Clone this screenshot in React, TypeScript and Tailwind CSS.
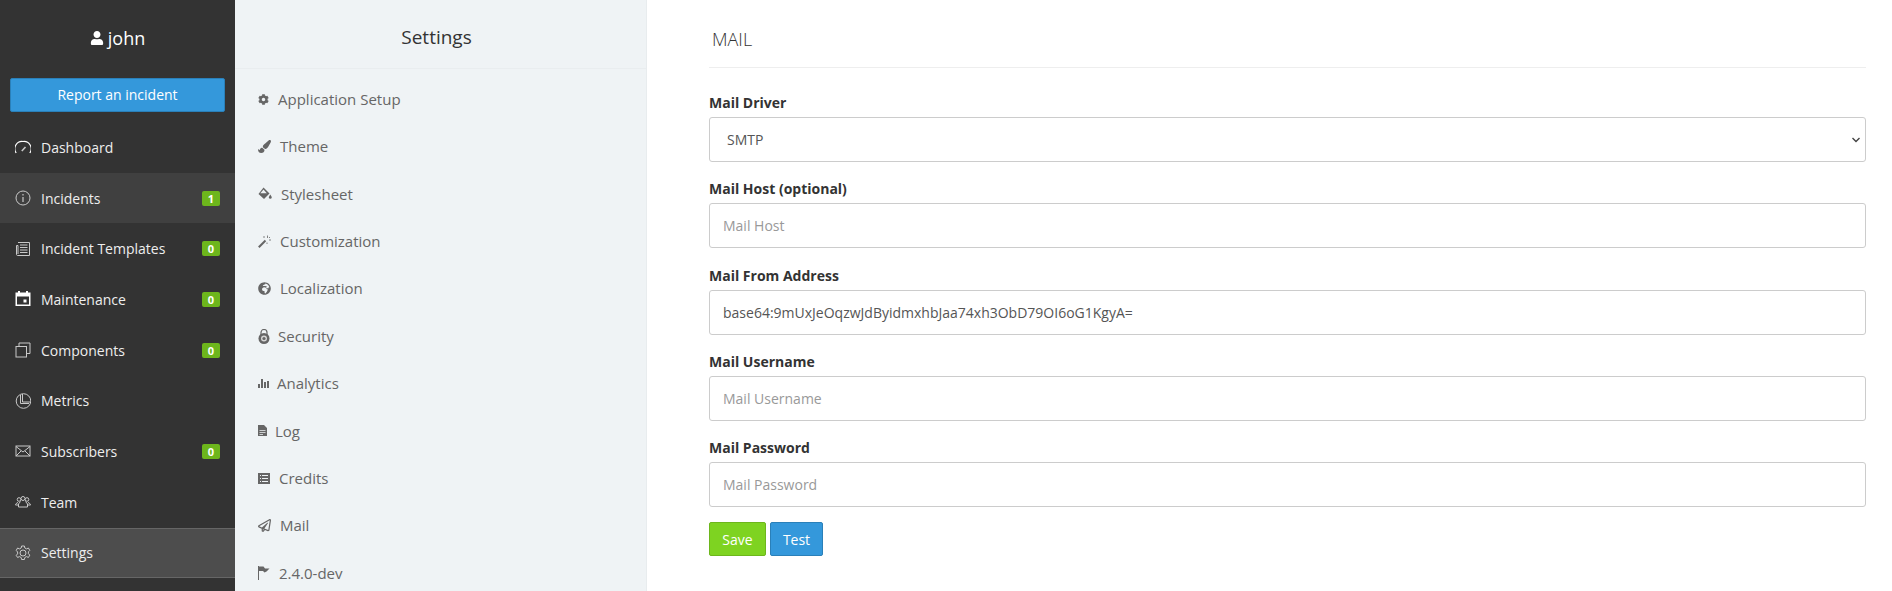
import React from "react";
import { FaCog, FaPaintBrush, FaGlobeAfrica, FaRegPaperPlane, FaUser } from "react-icons/fa";

const S = (p: { children: React.ReactNode }) => (
  <svg width="16" height="16" viewBox="0 0 16 16" fill="none" stroke="currentColor" strokeWidth="1" className="text-[#c9c9c9] shrink-0">
    {p.children}
  </svg>
);

const Speed = () => (
  <S>
    <path d="M1.200 14A7.300 7.300 0 0 1 8 2.500a7.300 7.300 0 0 1 6.800 11.500" strokeWidth="1.200" className="text-white" />
    <path d="M6.800 12 10.500 8" strokeWidth="1.600" />
  </S>
);
const Info = () => (
  <S>
    <circle cx="8" cy="8" r="7" />
    <path d="M8 7v5M8 4v1.400" strokeWidth="1.200" />
  </S>
);
const Paper = () => (
  <S>
    <path d="M3 1.500h11.500v13H2.500a1.200 1.200 0 0 1-1-1V4.500H3V13" />
    <path d="M5 4h7.500M5 6.500h7.500M5 9h7.500M5 11.500h7.500" />
  </S>
);
const Calendar = () => (
  <svg width="16" height="16" viewBox="0 0 16 16" className="text-white shrink-0" fill="currentColor">
    <path fillRule="evenodd" d="M3 0h2v1.500h6V0h2v1.500h2.500V15H.5V1.500H3V0ZM2 5.500V13.500h12V5.500H2Z" />
    <rect x="8.500" y="8.500" width="3" height="3" />
  </svg>
);
const Browsers = () => (
  <S>
    <rect x="1" y="4.500" width="10.500" height="10.500" />
    <path d="M4 4.500V1h11v10.500h-3.500" />
  </S>
);
const Pie = () => (
  <S>
    <circle cx="8.500" cy="8" r="7.300" />
    <path d="M7.500 1v8h7.500" />
    <path d="M5.500 2v8.500h8.500" />
  </S>
);
const Mail = () => (
  <S>
    <rect x="1" y="3" width="14" height="10" />
    <path d="M1 3.500 8 9l7-5.500M1 13l5-5M15 13l-5-5" />
  </S>
);
const People = () => (
  <S>
    <circle cx="4" cy="5.500" r="1.800" />
    <circle cx="8" cy="4.500" r="2" />
    <circle cx="12" cy="5.500" r="1.800" />
    <path d="M3 8.500c-1.500.5-2.500 1.500-2.500 2.500H3M13 8.500c1.500.5 2.500 1.500 2.500 2.500H13M5.500 7.500 3.500 10v3h9v-3l-2-2.500" />
  </S>
);
const Gear = () => (
  <S>
    <path d="M6.600 1h2.800l.4 2 1.800.9 1.800-.9 1.400 2.400-1.400 1.400v1.900l1.400 1.400-1.400 2.400-1.800-.9-1.800.9-.4 2H6.600l-.4-2-1.800-.9-1.800.9L1.200 10.300l1.400-1.400V7L1.200 5.400 2.600 3l1.800.9 1.800-.9z" />
    <circle cx="8" cy="8" r="3" />
  </S>
);

const mainItems: { label: string; icon: React.ReactNode; badge?: string; cls?: string }[] = [
  { label: "Dashboard", icon: <Speed /> },
  { label: "Incidents", icon: <Info />, badge: "1", cls: "bg-[#404040]" },
  { label: "Incident Templates", icon: <Paper />, badge: "0" },
  { label: "Maintenance", icon: <Calendar />, badge: "0" },
  { label: "Components", icon: <Browsers />, badge: "0" },
  { label: "Metrics", icon: <Pie /> },
  { label: "Subscribers", icon: <Mail />, badge: "0" },
  { label: "Team", icon: <People /> },
  { label: "Settings", icon: <Gear />, cls: "bg-[#4d4d4d] border-y border-[#666]" },
];

const Bucket = () => (
  <svg width="14" height="13" viewBox="0 0 14 13" fill="currentColor" className="shrink-0">
    <path d="M5.500.5 11.500 6.500 6 12 .5 7z" />
    <path d="M5.500 2.500 8.800 6.200H2.300z" fill="#eff3f5" />
    <path d="M12.300 7.500c.9 1.400 1.400 2.200 1.400 2.900a1.400 1.400 0 0 1-2.800 0c0-.7.500-1.500 1.400-2.900z" />
  </svg>
);
const Wand = () => (
  <svg width="13" height="13" viewBox="0 0 13 13" fill="none" stroke="currentColor" className="shrink-0">
    <path d="M.8 12.200 7.500 5.500" strokeWidth="2" />
    <path d="M6 1v2M9.500 .5v2.500M11 5h2M9 7.500v1.500M12 2l-1 1" strokeWidth=".8" />
  </svg>
);
const Lock = () => (
  <svg width="12" height="15" viewBox="0 0 12 15" className="shrink-0" fill="currentColor">
    <path fill="none" stroke="currentColor" strokeWidth="1.200" d="M3 6V3.500a3 3 0 0 1 6 0V6" />
    <circle cx="6" cy="9.500" r="5.500" />
    <circle cx="6" cy="9.500" r="3" fill="#d6d6d6" />
    <circle cx="6" cy="9.500" r="1.600" />
  </svg>
);
const Bars = () => (
  <svg width="11" height="9" viewBox="0 0 11 9" fill="currentColor" className="shrink-0">
    <rect x="0" y="5" width="2" height="4" />
    <rect x="3" y="0" width="2" height="9" />
    <rect x="6" y="3" width="2" height="6" />
    <rect x="9" y="2" width="2" height="7" />
  </svg>
);
const Doc = () => (
  <svg width="9" height="11" viewBox="0 0 9 11" fill="currentColor" className="shrink-0">
    <path fillRule="evenodd" d="M0 0h6l3 3v8H0V0Zm1.500 5v.8h6V5h-6Zm0 2v.8h6V7h-6Zm0 2v.8h3.500V9H1.500Z" />
  </svg>
);
const ListAlt = () => (
  <svg width="12" height="11" viewBox="0 0 12 11" fill="currentColor" className="shrink-0">
    <path fillRule="evenodd" d="M0 0h12v11H0V0Zm2 2v1h1V2H2Zm2 0v1h6V2H4ZM2 5v1h1V5H2Zm2 0v1h6V5H4ZM2 8v1h1V8H2Zm2 0v1h6V8H4Z" />
  </svg>
);
const Flag = () => (
  <svg width="12" height="14" viewBox="0 0 12 14" fill="currentColor" className="shrink-0">
    <rect x="0" y="0" width="1" height="14" />
    <path d="M1 .5h4.500L7 2.500h4.500L8.500 5.500 6.500 6.500 5 5H1z" />
  </svg>
);

const subItems: { label: string; icon: React.ReactNode; gap: string }[] = [
  { label: "Application Setup", icon: <FaCog size={11} className="shrink-0" />, gap: "gap-[9px]" },
  { label: "Theme", icon: <FaPaintBrush size={13} className="shrink-0" />, gap: "gap-[9px]" },
  { label: "Stylesheet", icon: <Bucket />, gap: "gap-[9px]" },
  { label: "Customization", icon: <Wand />, gap: "gap-[9px]" },
  { label: "Localization", icon: <FaGlobeAfrica size={13} className="shrink-0" />, gap: "gap-[9px]" },
  { label: "Security", icon: <Lock />, gap: "gap-[8px]" },
  { label: "Analytics", icon: <Bars />, gap: "gap-[8px]" },
  { label: "Log", icon: <Doc />, gap: "gap-[8px]" },
  { label: "Credits", icon: <ListAlt />, gap: "gap-[9px]" },
  { label: "Mail", icon: <FaRegPaperPlane size={13} className="shrink-0" />, gap: "gap-[9px]" },
  { label: "2.4.0-dev", icon: <Flag />, gap: "gap-[9px]" },
];

const Field = ({ label, children }: { label: string; children: React.ReactNode }) => (
  <div className="mb-[17.25px]">
    <label className="block text-[14px] leading-[20px] font-bold text-[#333] mb-[4px]">{label}</label>
    {children}
  </div>
);

const inputCls =
  "block w-full h-[45px] border border-[#ccc] rounded-[3px] px-[13px] text-[14px] text-[#555] bg-white placeholder:text-[#999] outline-none";

export default function App() {
  return (
    <div className="flex h-[591px] overflow-hidden bg-white font-['Open_Sans',sans-serif]">
      <aside className="w-[235px] shrink-0 bg-[#333] text-[#eee] flex flex-col">
        <div className="h-[78px] flex items-center justify-center gap-[4px] text-[18px] text-white pb-[2px]">
          <FaUser size={14} />
          <span>john</span>
        </div>
        <div className="px-[10px]">
          <button className="w-full h-[34px] rounded-[2px] bg-[#3498db] border border-[#2a80b9] text-white text-[14px] pb-[2px]">
            Report an incident
          </button>
        </div>
        <nav className="mt-[10px]">
          {mainItems.map((it) => (
            <div key={it.label} className={`h-[50.7px] flex items-center pl-[15px] pr-[15px] text-[14px] ${it.cls ?? ""}`}>
              <span className="w-[26px]">{it.icon}</span>
              <span>{it.label}</span>
              {it.badge && (
                <span className="ml-auto w-[18px] h-[15px] rounded-[2px] bg-[#6db61c] text-white text-[11px] leading-[15px] font-bold text-center">
                  {it.badge}
                </span>
              )}
            </div>
          ))}
        </nav>
      </aside>
      <aside className="w-[412px] shrink-0 bg-[#eff3f5] border-r border-[#e8ecee] flex flex-col">
        <div className="h-[69px] shrink-0 flex items-center justify-center border-b border-[#e9edef] text-[19px] text-[#333] pt-[7px] pr-[8px]">
          Settings
        </div>
        <nav className="pl-[23px] pt-[6.4px]">
          {subItems.map((it) => (
            <div key={it.label} className={`h-[47.4px] flex items-center text-[15px] text-[#666] ${it.gap}`}>
              {it.icon}
              <span>{it.label}</span>
            </div>
          ))}
        </nav>
      </aside>
      <main className="flex-1 pl-[62px] pr-[26px]">
        <h2 className="h-[68px] border-b border-[#eee] pt-[26px] pl-[3px] text-[18px] leading-[26px] font-light text-[#333]">MAIL</h2>
        <form className="pt-[25px]">
          <Field label="Mail Driver">
            <div className="relative">
              <select defaultValue="SMTP" className={`${inputCls} appearance-none pl-[17px]`}>
                <option>SMTP</option>
              </select>
              <svg width="8" height="6" viewBox="0 0 8 6" fill="none" stroke="#444" strokeWidth="1.400" className="absolute right-[6px] top-[20px] pointer-events-none">
                <path d="M.5 1 4 4.500 7.500 1" />
              </svg>
            </div>
          </Field>
          <Field label="Mail Host (optional)">
            <input className={inputCls} placeholder="Mail Host" />
          </Field>
          <Field label="Mail From Address">
            <input className={inputCls} defaultValue="base64:9mUxJeOqzwJdByidmxhbJaa74xh3ObD79OI6oG1KgyA=" />
          </Field>
          <Field label="Mail Username">
            <input className={inputCls} placeholder="Mail Username" />
          </Field>
          <Field label="Mail Password">
            <input className={inputCls} placeholder="Mail Password" />
          </Field>
          <div className="flex gap-[4px] -mt-[2px]">
            <button type="button" className="h-[34px] w-[57px] rounded-[2px] bg-[#7ed321] border border-[#6db61c] text-white text-[14px]">
              Save
            </button>
            <button type="button" className="h-[34px] w-[53px] rounded-[2px] bg-[#3498db] border border-[#2a80b9] text-white text-[14px]">
              Test
            </button>
          </div>
        </form>
      </main>
    </div>
  );
}
